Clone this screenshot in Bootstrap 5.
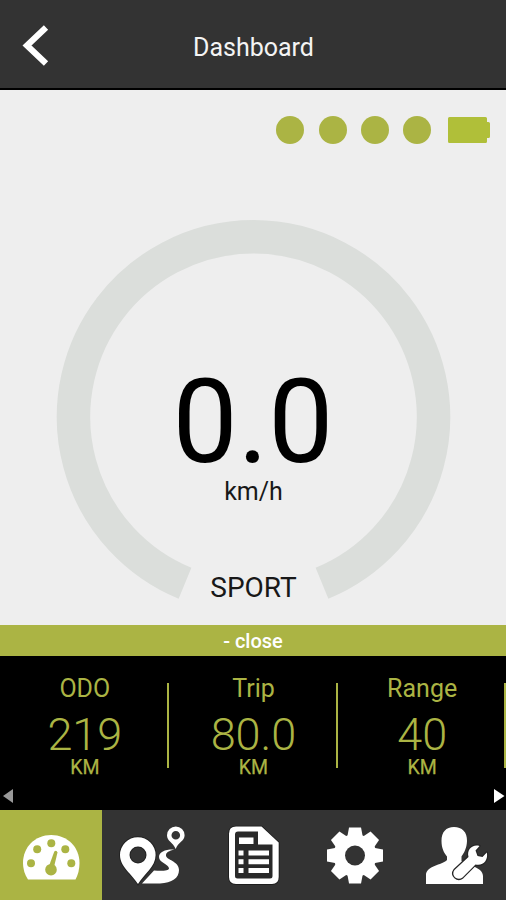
<!DOCTYPE html>
<html lang="en">
<head>
<meta charset="utf-8">
<meta name="viewport" content="width=device-width, initial-scale=1">
<title>Dashboard</title>
<link href="https://cdn.jsdelivr.net/npm/bootstrap@5.3.0/dist/css/bootstrap.min.css" rel="stylesheet">
<style>
  :root { --lime: #abb444; --dark: #333333; }
  body { font-family: Roboto, "Liberation Sans", sans-serif; background: #eee; }
  svg { display: block; }
  .screen { height: 900px; }
  .app-head { height: 90px; background: var(--dark); border-bottom: 2px solid #000; display: grid; grid-template-columns: 72px 1fr 72px; }
  .app-title { font-size: 25px; line-height: 30px; font-weight: 400; padding: 7px 0 0 1px; color: #f4f4f4; }
  .status { height: 80px; padding-right: 16px; gap: 14.3px; }
  .dot { width: 28px; height: 28px; background: var(--lime); }
  .battery { margin-left: 2.5px; }
  .gauge { display: grid; height: 455px; }
  .gauge > * { grid-area: 1 / 1; }
  .speed { font-size: 116px; line-height: 116px; padding-top: 194px; }
  .unit { font-size: 25px; line-height: 25px; margin-top: -1px; padding-left: 1px; color: #181818; }
  .mode { font-size: 28px; line-height: 34px; margin-top: 67px; padding-left: 1px; color: #181818; }
  .toggle-bar { height: 31px; background: var(--lime); color: #fff; font-size: 20px; line-height: 33px; font-weight: 500; }
  .stats { height: 154px; background: #000; color: var(--lime); }
  .stat { padding: 18px 0 0 1px; position: relative; }
  .stat::after { content: ""; position: absolute; right: -.5px; top: 27px; width: 2px; height: 85px; background: var(--lime); }
  .stat-name { font-size: 25px; line-height: 30px; }
  .stat-num { font-size: 45px; line-height: 45px; font-weight: 300; margin-top: 7.5px; }
  .stat-unit { font-size: 19.5px; line-height: 20px; margin-top: 1.5px; -webkit-text-stroke: .25px var(--lime); }
  .arrows { height: 21px; padding: 0 1px 0 3px; }
  .tabs { height: 90px; background: var(--dark); }
  .tab.active { background: var(--lime); flex: 0 0 102px; }
</style>
</head>
<body>
<div class="screen d-flex flex-column overflow-hidden">
  <header class="app-head align-items-center flex-shrink-0">
    <a href="#" aria-label="Back" class="d-block">
      <svg width="72" height="88" fill="none" stroke="#fff" stroke-width="6.2"><path d="M46 27.500 27 45.500 46 63.500"/></svg>
    </a>
    <h1 class="app-title text-center mb-0">Dashboard</h1>
  </header>

  <main class="flex-shrink-0">
    <div class="status d-flex justify-content-end align-items-center">
      <span class="dot rounded-circle"></span>
      <span class="dot rounded-circle"></span>
      <span class="dot rounded-circle"></span>
      <span class="dot rounded-circle"></span>
      <svg class="battery" width="42" height="26" fill="#b0bf39"><path d="M1.500 0H37.500Q39 0 39 1.500V5H40.500Q42 5 42 6.500V19.500Q42 21 40.500 21H39V24.500Q39 26 37.500 26H1.500Q0 26 0 24.500V1.500Q0 0 1.500 0Z"/></svg>
    </div>
    <div class="gauge">
      <svg width="506" height="455" fill="none" stroke="#dbdedb" stroke-width="33.5"><path d="M185 413.300A180 180 0 1 1 322 413.300"/></svg>
      <div class="text-center text-black">
        <div class="speed">0.0</div>
        <div class="unit">km/h</div>
        <div class="mode">SPORT</div>
      </div>
    </div>
  </main>

  <div class="toggle-bar text-center flex-shrink-0">- close</div>

  <section class="stats d-flex flex-column justify-content-between flex-shrink-0">
    <div class="row g-0 text-center">
      <div class="col-4 stat"><div class="stat-name">ODO</div><div class="stat-num">219</div><div class="stat-unit">KM</div></div>
      <div class="col-4 stat"><div class="stat-name">Trip</div><div class="stat-num">80.0</div><div class="stat-unit">KM</div></div>
      <div class="col-4 stat"><div class="stat-name">Range</div><div class="stat-num">40</div><div class="stat-unit">KM</div></div>
    </div>
    <div class="arrows d-flex justify-content-between">
      <svg width="10" height="15" fill="#999"><path d="M10 0V14L0 7Z"/></svg>
      <svg width="11" height="15" fill="#fff"><path d="M0 0V14L10.500 7Z"/></svg>
    </div>
  </section>

  <nav class="tabs d-flex flex-shrink-0">
    <a href="#" class="tab active" aria-label="Dashboard">
      <svg width="102" height="90" viewBox="0 810 102 90">
        <path fill="#fff" d="M28 879.500Q23 872 23 863C23 847 35 835 51.200 835S79.500 847 79.500 863Q79.500 872 75.500 879.500Z"/>
        <g fill="#abb444"><circle cx="31" cy="863.300" r="4"/><circle cx="37.200" cy="849.300" r="4"/><circle cx="51.300" cy="843.300" r="4"/><circle cx="65.300" cy="849.300" r="4"/><circle cx="71.300" cy="863.300" r="4"/><circle cx="51" cy="869.700" r="5.800"/><path d="M49 866 54.300 851.500Q56.500 849.500 57.500 852.500L54 867Z"/></g>
      </svg>
    </a>
    <a href="#" class="tab" aria-label="Route">
      <svg width="101" height="90" viewBox="102 810 101 90">
        <g fill="#fff">
          <path d="M174.500 849.500C166 849 159 851.500 159 857C159 863 169 864 169 868.500C169 871 161 871 154 870.500L142 883.500H160C172 883 179 878 179 870C179 861 166 860 166 855.500C166 852 169 851 174.500 849.500Z"/>
          <path fill-rule="evenodd" stroke="#222" stroke-width="2" paint-order="stroke" d="M138 884C132 874 120 867 120 855A17.800 17.800 0 0 1 155.600 855C155.600 867 144 874 138 884ZM138 846.500A8.500 8.500 0 1 0 138 863.500 8.500 8.500 0 0 0 138 846.500Z"/>
          <path fill-rule="evenodd" d="M175.700 849C173 842.500 167 841 167 835.300A8.800 8.800 0 0 1 184.600 835.300C184.600 841 178 842.500 175.700 849ZM175.800 831A4.300 4.300 0 1 0 175.800 839.600 4.300 4.300 0 0 0 175.800 831Z"/>
        </g>
      </svg>
    </a>
    <a href="#" class="tab" aria-label="Report">
      <svg width="101" height="90" viewBox="203 810 101 90">
        <path fill="#fff" stroke="#181818" stroke-width="1.500" paint-order="stroke" d="M236 826.500H261.500L278.700 842.500V877Q278.700 884 272 884H236Q229 884 229 877V833.500Q229 826.500 236 826.500Z"/>
        <path fill="#292929" d="M238 831.500H258V844.500H272.500V876Q272.500 878.500 270 878.500H237.500Q235 878.500 235 876V834.500Q235 831.500 238 831.500Z"/>
        <path fill="#fff" d="M239 837.500H253.500V844H239ZM238.500 850.500H243.500V855.500H238.500ZM248.500 850.500H269V855.500H248.500ZM238.500 859.300H243.500V864.300H238.500ZM248.500 859.300H269V864.300H248.500ZM238.500 868H243.500V873H238.500ZM248.500 868H269V873H248.500Z"/>
      </svg>
    </a>
    <a href="#" class="tab" aria-label="Settings">
      <svg width="101" height="90" viewBox="304 810 101 90">
        <g fill="#fff" transform="translate(355 855.500)">
          <circle r="21.500"/>
          <g id="teeth"><path id="tooth" d="M-7.500 -20 -6 -28H6L7.500 -20V20L6 28H-6L-7.500 20Z"/><use href="#tooth" transform="rotate(90)"/></g>
          <use href="#teeth" transform="rotate(45)"/>
          <circle r="10" fill="#333"/>
        </g>
      </svg>
    </a>
    <a href="#" class="tab" aria-label="Service">
      <svg width="101" height="90" viewBox="405 810 101 90">
        <path fill="#fff" d="M454 827C462 827 467.300 832 467 841C466.800 848 464 853 461.500 856.500V861C464 865 483 866 483 876V884H426V875C426 866 442 865 447 860V856.500C444 853 441.500 848 441.500 841C441.500 832 446 827 454 827Z"/>
        <path fill="#fff" stroke="#252525" stroke-width="2.400" stroke-linejoin="round" paint-order="stroke" d="M479.500 846 475.500 850.500 477.500 856 482.500 857 486.800 852.500C488.500 860 483 866.500 475.500 864.500L462.500 877.500C457.500 881.500 450.500 875.500 454.500 870L468.500 857C466.500 849.500 472.500 844 479.500 846Z"/>
      </svg>
    </a>
  </nav>
</div>
<script src="https://cdn.jsdelivr.net/npm/bootstrap@5.3.0/dist/js/bootstrap.bundle.min.js"></script>
</body>
</html>
